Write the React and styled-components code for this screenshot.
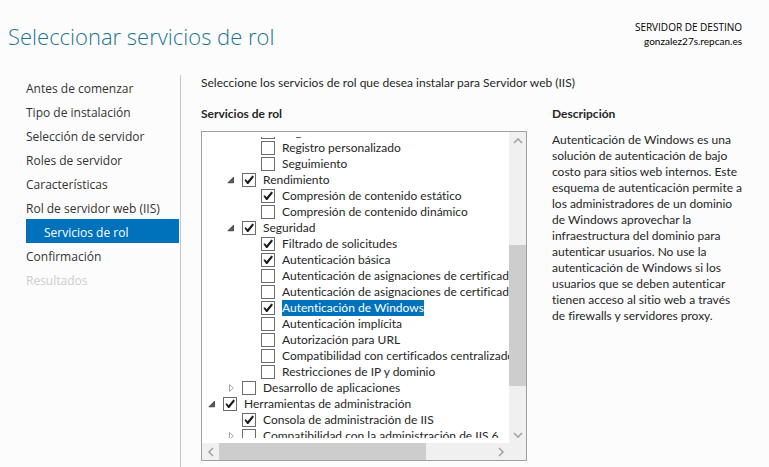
import React, { useState } from 'react';
import styled, { createGlobalStyle } from 'styled-components';

const GlobalStyle = createGlobalStyle`
  * { box-sizing: border-box; }
  body {
    margin: 0;
    background: #fcfcfc;
    color: #262626;
    font-family: Lato, 'Open Sans', sans-serif;
    font-size: 12px;
    font-variant-ligatures: none;
    line-height: 16px;
  }
`;

const Page = styled.div`
  display: flex;
  flex-direction: column;
  height: 100vh;
  min-height: 320px;
`;

const Header = styled.header`
  display: flex;
  justify-content: space-between;
  flex: none;
  height: 75px;
  padding: 20px 27px 0 8px;
`;

const Title = styled.h1`
  margin: 0;
  color: #1c7593;
  font-family: 'Open Sans', sans-serif;
  font-size: 22px;
  font-weight: 300;
  line-height: 32px;
  white-space: nowrap;
`;

const Destination = styled.div`
  color: #000;
  font-size: 10px;
  line-height: 14px;
  text-align: right;
  white-space: nowrap;
`;

const DestinationLabel = styled.div`
  font-family: 'Open Sans', sans-serif;
`;

const Body = styled.div`
  display: flex;
  flex: 1;
  min-height: 0;
`;

const Nav = styled.nav`
  flex: none;
  width: 181px;
  padding: 0 1px 0 26px;
  border-right: 1px solid #c6c6c6;
  font-family: 'Open Sans', sans-serif;
`;

const NavList = styled.ul`
  margin: 0;
  padding: 0;
  list-style: none;
`;

const NavLink = styled.a`
  display: block;
  height: 24px;
  padding-top: 2px;
  padding-left: ${(p) => (p.$nested ? 18 : 0)}px;
  background: ${(p) => (p.$active ? '#0072bc' : 'transparent')};
  color: ${(p) => (p.$active ? '#fff' : p.$disabled ? '#cdcdcd' : '#333')};
  line-height: 24px;
  text-decoration: none;
  white-space: nowrap;
`;

const Content = styled.main`
  display: flex;
  flex: 1;
  flex-direction: column;
  min-width: 0;
  padding: 0 25px 6px 20px;
`;

const Intro = styled.p`
  flex: none;
  margin: 0 0 15px;
`;

const Columns = styled.div`
  display: grid;
  flex: 1;
  grid-template-columns: minmax(0, 326fr) minmax(0, 192fr);
  gap: 25px;
  min-height: 0;
`;

const Column = styled.section`
  display: flex;
  flex-direction: column;
  min-height: 0;
`;

const Heading = styled.h2`
  flex: none;
  margin: 0 0 9px;
  font-size: 12px;
  font-weight: 700;
  line-height: 16px;
`;

const TreeFrame = styled.div`
  display: grid;
  flex: 1;
  grid-template-columns: minmax(0, 1fr) 17px;
  grid-template-rows: minmax(0, 1fr) 17px;
  min-height: 0;
  border: 1px solid #a0a0a0;
  background: #fff;
`;

const TreeView = styled.div`
  margin: 5px 0;
  overflow: hidden;
`;

const TreeRows = styled.ul`
  margin: -13px 0 0;
  padding: 0;
  list-style: none;
`;

const TreeRow = styled.li`
  display: flex;
  align-items: center;
  height: 16px;
  padding-left: ${(p) => p.$level * 19 - 16}px;
`;

const Toggle = styled.button`
  display: grid;
  flex: none;
  width: 14px;
  height: 16px;
  margin-right: 4px;
  padding: 0;
  border: 0;
  background: none;
  place-items: center;
`;

const Spacer = styled.span`
  flex: none;
  width: 18px;
`;

const CheckLabel = styled.label`
  display: flex;
  align-items: center;
  white-space: nowrap;
`;

const CheckBox = styled.span`
  display: grid;
  flex: none;
  width: 14px;
  height: 14px;
  margin-right: 7px;
  > * { grid-area: 1 / 1; }
`;

const CheckInput = styled.input`
  width: 14px;
  height: 14px;
  margin: 0;
  border: 1px solid #6b6b6b;
  background: #fff;
  appearance: none;
`;

const CheckMark = styled.svg`
  pointer-events: none;
`;

const RowText = styled.span`
  background: ${(p) => (p.$selected ? '#0072bc' : 'transparent')};
  color: ${(p) => (p.$selected ? '#fff' : 'inherit')};
`;

const Bar = styled.div`
  display: flex;
  flex-direction: ${(p) => (p.$vertical ? 'column' : 'row')};
  min-width: 0;
  min-height: 0;
  background: #f0f0f0;
`;

const Corner = styled.div`
  background: #f0f0f0;
`;

const BarButton = styled.button`
  display: grid;
  flex: none;
  width: 17px;
  height: 17px;
  padding: 0;
  border: 0;
  background: none;
  place-items: center;
`;

const Track = styled.div`
  flex: ${(p) => p.$share} 1 0;
`;

const Thumb = styled.div`
  flex: ${(p) => p.$share} 1 0;
  background: #cdcdcd;
`;

const Description = styled.p`
  margin: 1px 0 0;
`;

const steps = [
  { text: 'Antes de comenzar' },
  { text: 'Tipo de instalación' },
  { text: 'Selección de servidor' },
  { text: 'Roles de servidor' },
  { text: 'Características' },
  { text: 'Rol de servidor web (IIS)' },
  { text: 'Servicios de rol', active: true, nested: true },
  { text: 'Confirmación' },
  { text: 'Resultados', disabled: true },
];

const services = [
  { text: 'Registro ODBC', level: 3 },
  { text: 'Registro personalizado', level: 3 },
  { text: 'Seguimiento', level: 3 },
  { text: 'Rendimiento', level: 2, checked: true, node: 'open' },
  { text: 'Compresión de contenido estático', level: 3, checked: true },
  { text: 'Compresión de contenido dinámico', level: 3 },
  { text: 'Seguridad', level: 2, checked: true, node: 'open' },
  { text: 'Filtrado de solicitudes', level: 3, checked: true },
  { text: 'Autenticación básica', level: 3, checked: true },
  { text: 'Autenticación de asignaciones de certificados de cliente', level: 3 },
  { text: 'Autenticación de asignaciones de certificados de cliente de IIS', level: 3 },
  { text: 'Autenticación de Windows', level: 3, checked: true, selected: true },
  { text: 'Autenticación implícita', level: 3 },
  { text: 'Autorización para URL', level: 3 },
  { text: 'Compatibilidad con certificados centralizados SSL', level: 3 },
  { text: 'Restricciones de IP y dominio', level: 3 },
  { text: 'Desarrollo de aplicaciones', level: 2, node: 'closed' },
  { text: 'Herramientas de administración', level: 1, checked: true, node: 'open' },
  { text: 'Consola de administración de IIS', level: 2, checked: true },
  { text: 'Compatibilidad con la administración de IIS 6', level: 2, node: 'closed' },
];

const descriptionLines = [
  'Autenticación de Windows es una',
  'solución de autenticación de bajo',
  'costo para sitios web internos. Este',
  'esquema de autenticación permite a',
  'los administradores de un dominio',
  'de Windows aprovechar la',
  'infraestructura del dominio para',
  'autenticar usuarios. No use la',
  'autenticación de Windows si los',
  'usuarios que se deben autenticar',
  'tienen acceso al sitio web a través',
  'de firewalls y servidores proxy.',
];

const chevrons = {
  up: 'M1 7 L5 3 L9 7',
  down: 'M1 3 L5 7 L9 3',
  left: 'M7 1 L3 5 L7 9',
  right: 'M3 1 L7 5 L3 9',
};

function ScrollButton({ direction, label }) {
  return (
    <BarButton type="button" aria-label={label}>
      <svg width="10" height="10" viewBox="0 0 10 10" fill="none" stroke="#a3a3a3" strokeWidth="1.6">
        <path d={chevrons[direction]} />
      </svg>
    </BarButton>
  );
}

function ServiceRow({ text, level, checked: initial = false, node, selected }) {
  const [checked, setChecked] = useState(initial);
  return (
    <TreeRow $level={level}>
      {node ? (
        <Toggle type="button" aria-label={text} aria-expanded={node === 'open'}>
          <svg width="8" height="8" viewBox="0 0 8 8">
            {node === 'open' ? (
              <path d="M6.5 1.2 V6.8 H0.9 Z" fill="#595959" stroke="#333" strokeWidth="0.8" />
            ) : (
              <path d="M2.5 0.5 L6.3 4 L2.5 7.5 Z" fill="#fff" stroke="#a6a6a6" />
            )}
          </svg>
        </Toggle>
      ) : (
        <Spacer />
      )}
      <CheckLabel>
        <CheckBox>
          <CheckInput type="checkbox" checked={checked} onChange={(e) => setChecked(e.target.checked)} />
          {checked && (
            <CheckMark width="14" height="14" viewBox="0 0 14 14">
              <path d="M2.4 7 L3.8 6.2 L5.6 8.2 L10.4 2.6 L11.7 3.2 L11.5 4.6 L6.3 11 L5.1 11 Z" fill="#1c1c1c" />
            </CheckMark>
          )}
        </CheckBox>
        <RowText $selected={selected}>{text}</RowText>
      </CheckLabel>
    </TreeRow>
  );
}

export default function App() {
  return (
    <>
      <GlobalStyle />
      <Page>
        <Header>
          <Title>Seleccionar servicios de rol</Title>
          <Destination>
            <DestinationLabel>SERVIDOR DE DESTINO</DestinationLabel>
            gonzalez27s.repcan.es
          </Destination>
        </Header>
        <Body>
          <Nav>
            <NavList>
              {steps.map((s) => (
                <li key={s.text}>
                  <NavLink
                    href="#"
                    $active={s.active}
                    $nested={s.nested}
                    $disabled={s.disabled}
                    aria-current={s.active ? 'step' : undefined}
                    aria-disabled={s.disabled}
                  >
                    {s.text}
                  </NavLink>
                </li>
              ))}
            </NavList>
          </Nav>
          <Content>
            <Intro>Seleccione los servicios de rol que desea instalar para Servidor web (IIS)</Intro>
            <Columns>
              <Column>
                <Heading>Servicios de rol</Heading>
                <TreeFrame>
                  <TreeView>
                    <TreeRows>
                      {services.map((s) => (
                        <ServiceRow key={s.text} {...s} />
                      ))}
                    </TreeRows>
                  </TreeView>
                  <Bar $vertical>
                    <ScrollButton direction="up" label="Subir" />
                    <Track $share={96} />
                    <Thumb $share={141} />
                    <Track $share={40} />
                    <ScrollButton direction="down" label="Bajar" />
                  </Bar>
                  <Bar>
                    <ScrollButton direction="left" label="Izquierda" />
                    <Thumb $share={207} />
                    <Track $share={66} />
                    <ScrollButton direction="right" label="Derecha" />
                  </Bar>
                  <Corner />
                </TreeFrame>
              </Column>
              <Column>
                <Heading>Descripción</Heading>
                <Description>
                  {descriptionLines.map((line) => (
                    <React.Fragment key={line}>
                      {line}
                      <br />
                    </React.Fragment>
                  ))}
                </Description>
              </Column>
            </Columns>
          </Content>
        </Body>
      </Page>
    </>
  );
}
